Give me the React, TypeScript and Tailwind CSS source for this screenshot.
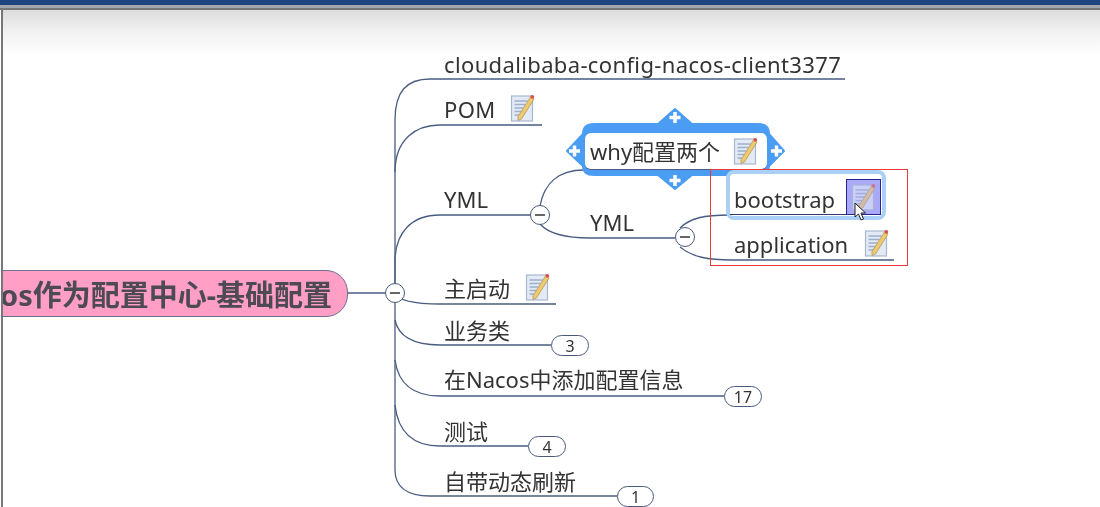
const F = "[font-family:'Noto_Sans','Noto_Sans_CJK_SC',sans-serif]";

function Note({ className }: { className: string }) {
  return (
    <svg viewBox="0 0 24 28" className={`blur-[0.3px] ${className}`}>
      <rect x="1" y="2" width="21" height="25" fill="#e3eaf6" stroke="#a9b8cc" strokeWidth="1.2" />
      <g stroke="#9db0d0" strokeWidth="1.4">
        <path d="M4 7H17M4 10.5H15M4 14H13M4 17.5H11M4 21H9" />
      </g>
      <path d="M20 3 L23.5 5 L11 25 L7.5 26.5 L7.5 22.5 Z" fill="#eccb70" stroke="#b7955a" strokeWidth="0.8" />
      <circle cx="21.8" cy="2.8" r="1.9" fill="#d9544f" />
    </svg>
  );
}

function Pill({ n, className }: { n: string; className: string }) {
  return (
    <div className={`absolute h-[21px] rounded-full border border-[#4a5a7c] bg-white flex items-center justify-center text-[16px] text-[#333] ${className}`}>
      <span className="blur-[0.3px]">{n}</span>
    </div>
  );
}

function Label({ children, className }: { children: React.ReactNode; className: string }) {
  return <div className={`absolute whitespace-nowrap text-[22px] leading-[30px] text-[#333] blur-[0.35px] ${className}`}>{children}</div>;
}

function Toggle({ className }: { className: string }) {
  return (
    <div className={`absolute w-[20px] h-[20px] rounded-full border border-[#4a5a7c] bg-white flex items-center justify-center ${className}`}>
      <div className="w-[10px] h-[2px] bg-[#666]" />
    </div>
  );
}

export default function App() {
  return (
    <div className={`w-[1100px] h-[507px] flex flex-col overflow-hidden bg-white ${F}`}>
      <div className="h-[5px] bg-[#1f4580]" />
      <div className="h-[3px] bg-[#a3a6ad]" />
      <div className="h-[2px] bg-[#77777a]" />
      <div className="relative flex-1 bg-gradient-to-b from-[#dcdcdc] via-[#f2f2f2] via-[22px] to-white to-[46px] overflow-hidden">
        <svg viewBox="0 10 1100 497" className="absolute inset-0 w-[1100px] h-[497px]" fill="none">
          <g stroke="#4a5d80" strokeWidth="1.3">
            <path d="M348 293H395" />
            <path d="M845 79H430C406 79 395 92 395 120V470C395 486 406 496 430 496H617" />
            <path d="M542 125H440C415 125 395 140 395 172" />
            <path d="M530 215H440C412 215 395 232 395 262V293" />
            <path d="M395 293C398 300 410 304 440 304H556" />
            <path d="M395 320C398 335 412 345 440 345H551" />
            <path d="M395 360C398 382 412 396 440 396H724" />
            <path d="M395 405C398 432 412 446 440 446H528" />
            <path d="M540 206C544 184 558 170 584 170H764" />
            <path d="M540 224C548 233 562 238 590 238H675" />
            <path d="M680 228C690 218 704 215 730 215H881" />
            <path d="M680 247C692 257 708 260 732 260H894" />
          </g>
          <path
            d="M675 109L692 124H758Q769 124 769 134L784 151L769 166Q769 175 758 175H692L675 189L658 175H594Q583 175 583 166L567 151L583 134Q583 124 594 124H658Z"
            fill="#4a9df3"
            stroke="#4a9df3"
            strokeWidth="2"
            strokeLinejoin="round"
          />
          <path d="M675 112V123M669.5 117.5H680.5M675 175V186M669.5 180.5H680.5M569 151H580M574.5 145.5V156.5M771 151H782M776.5 145.5V156.5" stroke="#fff" strokeWidth="3.5" />
        </svg>

        <div className="absolute left-[-30px] top-[260px] w-[378px] h-[47px] rounded-r-[22px] border border-[#6d6f94] bg-[#ff9fc6] flex items-center justify-end pr-[15px] pt-[3px] text-[29px] font-bold text-[#4d4a55] whitespace-nowrap">
          <span className="blur-[0.35px]">os作为配置中心-基础配置</span>
        </div>
        <div className="absolute left-0 top-0 bottom-0 w-[3px] border-l border-white bg-[#77777a]" />
        <Toggle className="left-[385px] top-[273px]" />

        <Label className="left-[444px] top-[39px] text-[22.5px] tracking-[0.36px]">cloudalibaba-config-nacos-client3377</Label>
        <Label className="left-[444px] top-[84px] tracking-[0.4px]">POM</Label>
        <Note className="absolute left-[510px] top-[84px] w-[25px] h-[28px]" />
        <Label className="left-[444px] top-[174px]">YML</Label>
        <Toggle className="left-[530px] top-[195px]" />

        <div className="absolute left-[585px] top-[123px] w-[182px] h-[37px] rounded-[6px] bg-white border-b border-[#4a5d80] flex items-center pl-[5px] text-[22px] text-[#333] whitespace-nowrap">
          <span className="blur-[0.35px]">why配置两个</span>
        </div>
        <Note className="absolute left-[733px] top-[127px] w-[25px] h-[28px]" />

        <Label className="left-[590px] top-[197px]">YML</Label>
        <Toggle className="left-[675px] top-[217px]" />

        <div className="absolute left-[726px] top-[160px] w-[160px] h-[50px] rounded-[8px] border-[4px] border-[#abd0f8] bg-white" />
        <Label className="left-[734px] top-[174px]">bootstrap</Label>
        <div className="absolute left-[730px] top-[204px] w-[151px] h-[1px] bg-[#2f3a66]" />
        <div className="absolute left-[846px] top-[169px] w-[35px] h-[36px] border border-[#25258c] bg-[#a9a9f7] flex items-center justify-center">
          <Note className="w-[25px] h-[28px] opacity-60" />
        </div>

        <Label className="left-[734px] top-[219px]">application</Label>
        <Note className="absolute left-[864px] top-[219px] w-[25px] h-[28px]" />

        <Label className="left-[444px] top-[263px] text-[20px]">主启动</Label>
        <Note className="absolute left-[525px] top-[263px] w-[25px] h-[28px]" />
        <Label className="left-[444px] top-[305px] text-[20px]">业务类</Label>
        <Pill n="3" className="left-[551px] top-[325px] w-[38px]" />
        <Label className="left-[444px] top-[354px] text-[20px]">在Nacos中添加配置信息</Label>
        <Pill n="17" className="left-[724px] top-[376px] w-[38px]" />
        <Label className="left-[444px] top-[406px] text-[20px]">测试</Label>
        <Pill n="4" className="left-[528px] top-[426px] w-[38px]" />
        <Label className="left-[444px] top-[456px] text-[20px]">自带动态刷新</Label>
        <Pill n="1" className="left-[617px] top-[476px] w-[37px]" />

        <div className="absolute left-[710px] top-[159px] w-[198px] h-[97px] border border-[#f03a3a]" />

        <svg viewBox="0 0 12 19" className="absolute left-[854px] top-[192px] w-[12px] h-[19px]">
          <path d="M1 1V15L4.5 12L7 18L9.5 17L7 11H11.5Z" fill="#fff" stroke="#222" strokeWidth="1" />
        </svg>
      </div>
    </div>
  );
}
